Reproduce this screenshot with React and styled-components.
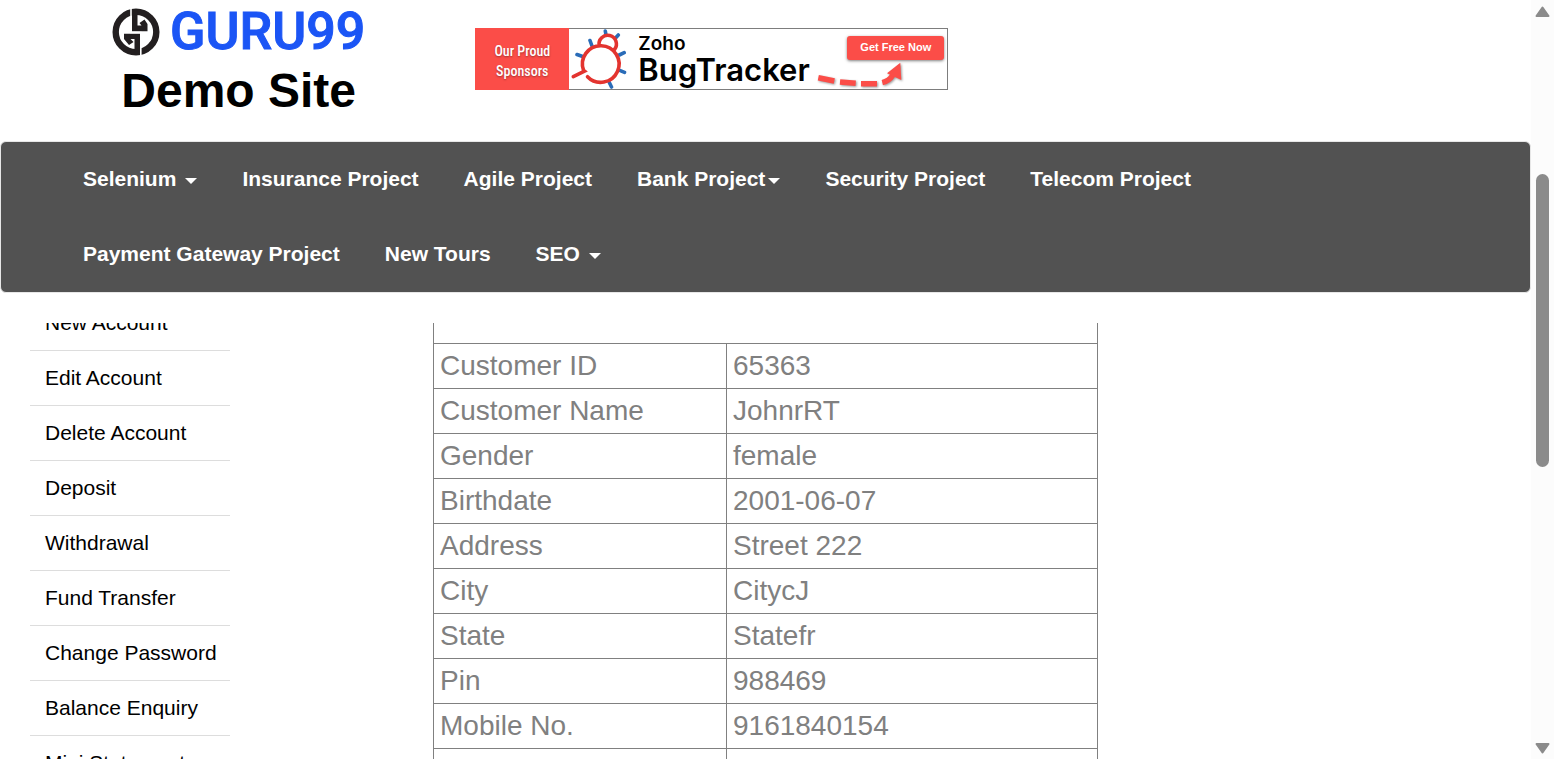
import React from "react";
import styled, { createGlobalStyle } from "styled-components";

const GlobalStyle = createGlobalStyle`
  *, *::before, *::after { box-sizing: border-box; }
  body {
    margin: 0;
    background: #fff;
    color: #000;
    font-family: "Liberation Sans", Arial, sans-serif;
    font-size: 21px;
    line-height: 30px;
  }
`;

const Window = styled.div`
  display: flex;
  height: 100vh;
  overflow: hidden;
`;

const Page = styled.div`
  flex: 1;
  min-width: 0;
  display: flex;
  flex-direction: column;
`;

const Header = styled.header`
  display: flex;
  align-items: flex-start;
  gap: 110px;
  padding: 8px 0 24px 112px;
`;

const Brand = styled.div`
  display: flex;
  flex-direction: column;
`;

const LogoLink = styled.a`
  display: flex;
  align-items: center;
  gap: 10px;
  height: 48px;
  color: #1b55f5;
  font: 500 52px/48px Roboto, sans-serif;
  -webkit-text-stroke: 1px #1b55f5;
  text-decoration: none;
`;

const SiteTitle = styled.h2`
  margin: 8px 0 0;
  font-size: 48px;
  line-height: 53px;
  font-weight: 700;
  text-align: center;
`;

const Banner = styled.a`
  display: flex;
  height: 62px;
  margin-top: 20px;
  border: 1px solid #7d7d7d;
  border-left: 0;
  color: #000;
  text-decoration: none;
`;

const SponsorLabel = styled.span`
  display: flex;
  align-items: center;
  justify-content: center;
  width: 94px;
  margin: -1px 0;
  padding-top: 3px;
  background: #fb4d48;
  color: #fff;
  font: 500 14px/20px "Roboto Condensed", "Liberation Sans Narrow", Roboto, sans-serif;
  text-align: center;
  text-shadow: 0 1px 2px rgba(0, 0, 0, 0.35);
`;

const ProductName = styled.span`
  display: flex;
  flex-direction: column;
  width: 178px;
  padding: 4px 0 0 6px;
  font-family: Inter, sans-serif;
`;

const Maker = styled.span`
  font-size: 19px;
  line-height: 22px;
  font-weight: 600;
`;

const Product = styled.strong`
  font-size: 31px;
  line-height: 30px;
  font-weight: 600;
`;

const Offer = styled.span`
  display: flex;
  flex-direction: column;
  align-items: flex-end;
  width: 137px;
  padding: 7px 3px 0 0;
`;

const OfferPill = styled.span`
  width: 97px;
  height: 24px;
  border-radius: 3px;
  background: #fb4d48;
  box-shadow: 0 1px 3px rgba(0, 0, 0, 0.5);
  color: #fff;
  font-size: 11px;
  font-weight: 700;
  line-height: 22px;
  text-align: center;
`;

const OfferArrow = styled.svg`
  align-self: flex-start;
  margin-left: 6px;
  filter: drop-shadow(1px 1px 1px rgba(0, 0, 0, 0.4));
`;

const Nav = styled.nav`
  margin: 0 0 30px;
  padding: 0 60px;
  border: 1px solid #e7e7e7;
  border-radius: 6px;
  background: #525252;
`;

const NavList = styled.ul`
  display: flex;
  flex-wrap: wrap;
  margin: 0;
  padding: 0;
  list-style: none;
`;

const NavLink = styled.a`
  display: flex;
  align-items: center;
  gap: ${(p) => (p.$tight ? 3 : 9)}px;
  height: 75px;
  padding: 0 23px 2px 22px;
  color: #fff;
  font-weight: 700;
  text-decoration: none;
`;

const Caret = styled.span`
  margin-top: 4px;
  border: 6px solid transparent;
  border-top-color: #fff;
  border-bottom: 0;
`;

const Content = styled.div`
  flex: 1;
  min-height: 0;
  overflow: hidden;
  display: grid;
  grid-template-columns: 1fr minmax(0, 665px) 1fr;
  align-items: start;
`;

const SideMenu = styled.ul`
  width: 200px;
  margin: -27px 0 0 30px;
  padding: 0;
  list-style: none;
`;

const SideItem = styled.li`
  border-bottom: 1px solid #ddd;
`;

const SideLink = styled.a`
  display: block;
  padding: 12px 15px;
  color: #000;
  text-decoration: none;
  white-space: nowrap;
`;

const Details = styled.table`
  width: 100%;
  margin-top: -25px;
  border-collapse: collapse;
  table-layout: fixed;
  color: #808080;
  font-size: 28px;
  line-height: 44px;
`;

const LabelColumn = styled.col`
  width: 293px;
`;

const Cell = styled.td`
  height: 45px;
  padding: 0 6px;
  border: 1px solid #808080;
`;

const ScrollTrack = styled.div`
  flex: none;
  display: flex;
  flex-direction: column;
  align-items: center;
  width: 23px;
  padding: 6px 0 5px;
  background: #fcfcfc;
`;

const ScrollThumb = styled.div`
  width: 13px;
  height: 293px;
  margin: 156px 0 auto;
  border-radius: 7px;
  background: #8b8b8b;
`;

const menus = [
  { label: "Selenium", caret: true },
  { label: "Insurance Project" },
  { label: "Agile Project" },
  { label: "Bank Project", caret: true, tight: true },
  { label: "Security Project" },
  { label: "Telecom Project" },
  { label: "Payment Gateway Project" },
  { label: "New Tours" },
  { label: "SEO", caret: true },
];

const sideLinks = [
  "New Account",
  "Edit Account",
  "Delete Account",
  "Deposit",
  "Withdrawal",
  "Fund Transfer",
  "Change Password",
  "Balance Enquiry",
  "Mini Statement",
];

const customer = [
  ["Customer ID", "65363"],
  ["Customer Name", "JohnrRT"],
  ["Gender", "female"],
  ["Birthdate", "2001-06-07"],
  ["Address", "Street 222"],
  ["City", "CitycJ"],
  ["State", "Statefr"],
  ["Pin", "988469"],
  ["Mobile No.", "9161840154"],
  ["", ""],
];

const Emblem = () => (
  <svg width="48" height="48" viewBox="0 0 48 48" aria-hidden="true">
    <circle cx="24" cy="24" r="20.300" fill="none" stroke="#231f20" strokeWidth="6.400" />
    <path
      fill="#231f20"
      d="M20 1H25.500V17.500H29.500L27.500 15L32.500 11.500L35.500 16V23.300H20ZM28 47H22.500V31H18.500L21.500 34L17 37L12 31V25.700H28Z"
    />
    <path d="M19 0V24.500H28.800V48" fill="none" stroke="#fff" strokeWidth="1.600" />
  </svg>
);

const Bug = () => (
  <svg width="63" height="60" viewBox="0 1 63 60" aria-hidden="true">
    <g fill="none" strokeLinecap="round" strokeWidth="3.600">
      <path
        stroke="#2a6cb8"
        d="M36.300 3L37 7M49.300 7L47 9.500M21 12.500L23 18M8 26.500L13 28.300M55.200 24.700L50.300 27M50.700 42.300L55.500 44.300M40.300 54.500L42.500 59"
      />
      <path
        stroke="#e3342f"
        d="M4.300 48.700L15.500 43.200L14.600 42.500A18.300 18.300 0 1 1 18.500 48.700M30.200 17.800A8.700 8.700 0 1 1 45.500 21.500"
      />
    </g>
  </svg>
);

const Arrow = () => (
  <OfferArrow width="92" height="29" viewBox="0 0 92 29" aria-hidden="true">
    <path
      d="M2.300 17.700L18.300 21M24 22L39.700 23.300M45 23.700H61M66.300 22.700Q73 21 77 15"
      fill="none"
      stroke="#fb4d48"
      strokeWidth="5.500"
    />
    <path d="M84.300 2.700L71 13.300L85.300 20Z" fill="#fb4d48" />
  </OfferArrow>
);

const ScrollArrow = ({ down }) => (
  <svg width="15" height="12" viewBox="0 0 15 12" aria-hidden="true">
    <path
      d={down ? "M1.500 2H13.500L7.500 10.500Z" : "M1.500 10H13.500L7.500 1.500Z"}
      fill="#8b8b8b"
      stroke="#8b8b8b"
      strokeWidth="2"
      strokeLinejoin="round"
    />
  </svg>
);

export default function App() {
  return (
    <>
      <GlobalStyle />
      <Window>
        <Page>
          <Header>
            <Brand>
              <LogoLink href="#home">
                <Emblem />
                GURU99
              </LogoLink>
              <SiteTitle>Demo Site</SiteTitle>
            </Brand>
            <Banner href="#bugtracker">
              <SponsorLabel>
                Our Proud
                <br />
                Sponsors
              </SponsorLabel>
              <Bug />
              <ProductName>
                <Maker>Zoho</Maker>
                <Product>BugTracker</Product>
              </ProductName>
              <Offer>
                <OfferPill>Get Free Now</OfferPill>
                <Arrow />
              </Offer>
            </Banner>
          </Header>
          <Nav>
            <NavList>
              {menus.map((m) => (
                <li key={m.label}>
                  <NavLink href="#menu" $tight={m.tight}>
                    {m.label}
                    {m.caret && <Caret />}
                  </NavLink>
                </li>
              ))}
            </NavList>
          </Nav>
          <Content>
            <SideMenu>
              {sideLinks.map((label) => (
                <SideItem key={label}>
                  <SideLink href="#account">{label}</SideLink>
                </SideItem>
              ))}
            </SideMenu>
            <Details>
              <colgroup>
                <LabelColumn />
                <col />
              </colgroup>
              <tbody>
                <tr>
                  <Cell colSpan={2} />
                </tr>
                {customer.map(([name, value], i) => (
                  <tr key={i}>
                    <Cell>{name}</Cell>
                    <Cell>{value}</Cell>
                  </tr>
                ))}
              </tbody>
            </Details>
          </Content>
        </Page>
        <ScrollTrack>
          <ScrollArrow />
          <ScrollThumb />
          <ScrollArrow down />
        </ScrollTrack>
      </Window>
    </>
  );
}
